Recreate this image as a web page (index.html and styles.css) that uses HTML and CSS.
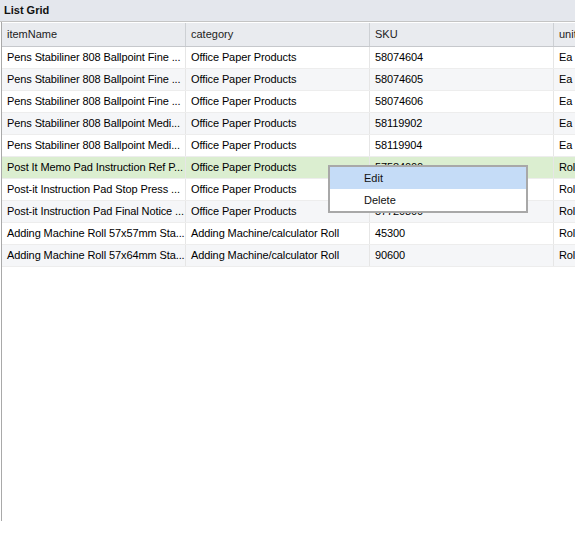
FILE: index.html
```html
<!DOCTYPE html>
<html lang="en">
<head>
  <meta charset="UTF-8" />
  <title>List Grid</title>
  <link rel="stylesheet" href="styles.css">
</head>
<body>
  <div class="panel">
    <div class="panel-title">List Grid</div>
    <div class="grid">
      <div class="row head">
        <div class="cell">itemName</div>
        <div class="cell">category</div>
        <div class="cell">SKU</div>
        <div class="cell">unit</div>
      </div>
      <div class="row">
        <div class="cell">Pens Stabiliner 808 Ballpoint Fine ...</div>
        <div class="cell">Office Paper Products</div>
        <div class="cell">58074604</div>
        <div class="cell">Ea</div>
      </div>
      <div class="row alt">
        <div class="cell">Pens Stabiliner 808 Ballpoint Fine ...</div>
        <div class="cell">Office Paper Products</div>
        <div class="cell">58074605</div>
        <div class="cell">Ea</div>
      </div>
      <div class="row">
        <div class="cell">Pens Stabiliner 808 Ballpoint Fine ...</div>
        <div class="cell">Office Paper Products</div>
        <div class="cell">58074606</div>
        <div class="cell">Ea</div>
      </div>
      <div class="row alt">
        <div class="cell">Pens Stabiliner 808 Ballpoint Medi...</div>
        <div class="cell">Office Paper Products</div>
        <div class="cell">58119902</div>
        <div class="cell">Ea</div>
      </div>
      <div class="row">
        <div class="cell">Pens Stabiliner 808 Ballpoint Medi...</div>
        <div class="cell">Office Paper Products</div>
        <div class="cell">58119904</div>
        <div class="cell">Ea</div>
      </div>
      <div class="row selected">
        <div class="cell">Post It Memo Pad Instruction Ref P...</div>
        <div class="cell">Office Paper Products</div>
        <div class="cell">57584000</div>
        <div class="cell">Roll</div>
      </div>
      <div class="row">
        <div class="cell">Post-it Instruction Pad Stop Press ...</div>
        <div class="cell">Office Paper Products</div>
        <div class="cell">57720000</div>
        <div class="cell">Roll</div>
      </div>
      <div class="row alt">
        <div class="cell">Post-it Instruction Pad Final Notice ...</div>
        <div class="cell">Office Paper Products</div>
        <div class="cell">57720800</div>
        <div class="cell">Roll</div>
      </div>
      <div class="row">
        <div class="cell">Adding Machine Roll 57x57mm Sta...</div>
        <div class="cell">Adding Machine/calculator Roll</div>
        <div class="cell">45300</div>
        <div class="cell">Roll</div>
      </div>
      <div class="row alt">
        <div class="cell">Adding Machine Roll 57x64mm Sta...</div>
        <div class="cell">Adding Machine/calculator Roll</div>
        <div class="cell">90600</div>
        <div class="cell">Roll</div>
      </div>
    </div>
  </div>

  <div class="menu">
    <div class="menu-item active">Edit</div>
    <div class="menu-item">Delete</div>
  </div>
</body>
</html>
```

FILE: styles.css
```css
body {
  margin: 0;
  font-family: Tahoma, "Liberation Sans", Arial, sans-serif;
  font-size: 11px;
  color: #000;
  background: #fff;
  overflow: hidden;
}
.panel {
  width: 575px;
  overflow: hidden;
}
.panel-title {
  height: 22px;
  line-height: 20px;
  padding-left: 4px;
  font-weight: bold;
  font-size: 11px;
  color: #111;
  background: #e4e7ed;
  border-bottom: 1px solid #c4c4c4;
  box-sizing: border-box;
}
.grid {
  margin-left: 1px;
  border-left: 1px solid #a9a9a9;
  height: 499px;
}
.row {
  display: grid;
  grid-template-columns: 184px 184px 184px 184px;
  height: 22px;
  border-bottom: 1px solid #ededed;
  box-sizing: border-box;
}
.row.alt {
  background: #f5f6f8;
}
.row.selected {
  background: #dbeed0;
}
.row.head {
  height: 25px;
  background: #e9ebef;
  border-top: 1px solid #fff;
  border-bottom: 1px solid #c6c8cc;
  color: #222;
}
.cell {
  padding: 0 2px 0 5px;
  line-height: 21px;
  white-space: nowrap;
  overflow: hidden;
  letter-spacing: -0.1px;
  border-right: 1px solid #e6e6e6;
}
.row.head .cell {
  line-height: 22px;
  letter-spacing: 0;
  border-right: 1px solid #cdd0d4;
}
.menu {
  position: absolute;
  left: 328px;
  top: 165px;
  width: 196px;
  background: #fff;
  border: 2px solid #a8a8a8;
}
.menu-item {
  height: 22px;
  line-height: 22px;
  padding-left: 34px;
  color: #111;
}
.menu-item.active {
  background: #c5dcf7;
}
```
